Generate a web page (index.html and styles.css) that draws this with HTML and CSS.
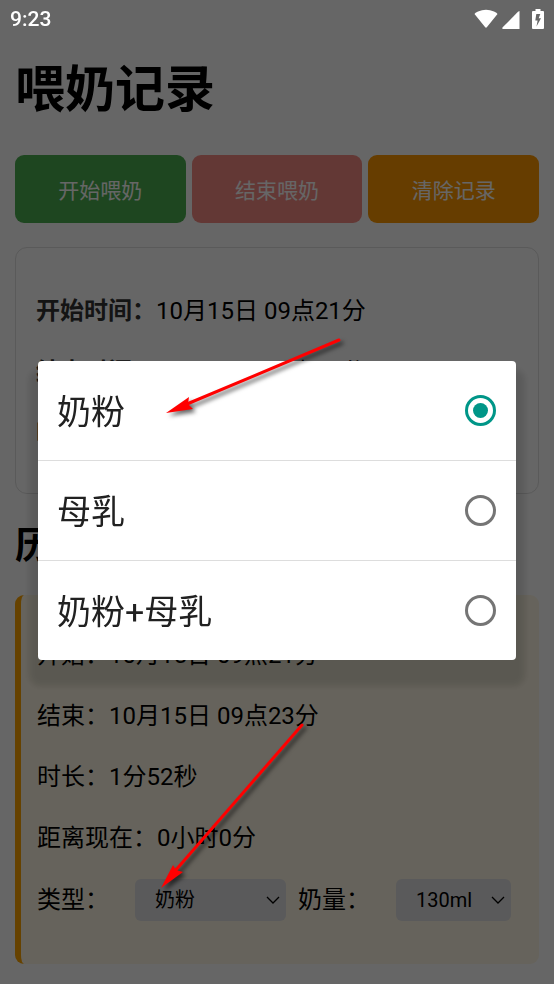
FILE: index.html
```html
<!DOCTYPE html>
<html lang="zh-CN">
<head>
  <meta charset="UTF-8">
  <meta name="viewport" content="width=device-width, initial-scale=1.0">
  <title>喂奶记录</title>
  <link rel="stylesheet" href="styles.css">
</head>
<body>
  <header class="status-bar">
    <span class="clock">9:23</span>
    <div class="status-icons">
      <svg class="wifi" width="24" height="20" viewBox="0 0 24 20"><path d="M0.5 5Q1 3.6 4 2.4Q12 -1 20 2.4Q23 3.6 23.5 5L13 18Q12 19.4 11 18Z"/></svg>
      <svg class="signal" width="18" height="18" viewBox="0 0 18 18"><path d="M17.5 0V18H1Q-0.3 17.6 0.7 16.3L16 0.8Z"/></svg>
      <svg class="battery" width="12" height="20" viewBox="0 0 12 20"><path fill-rule="evenodd" d="M3.5 0H8.5V2H11Q12 2 12 3V19Q12 20 11 20H1Q0 20 0 19V3Q0 2 1 2H3.5ZM4.3 5L3.3 11.4H5.6L4.5 17.4L9 9.3H6.7L8.3 5Z"/></svg>
    </div>
  </header>

  <main class="page">
    <h1>喂奶记录</h1>

    <div class="buttons">
      <button type="button" class="btn btn-start">开始喂奶</button>
      <button type="button" class="btn btn-end" disabled>结束喂奶</button>
      <button type="button" class="btn btn-clear">清除记录</button>
    </div>

    <section class="current">
      <p><strong>开始时间：</strong>10月15日 09点21分</p>
      <p><strong>结束时间：</strong>10月15日 09点23分</p>
      <p><strong>时长：</strong>1分52秒</p>
    </section>

    <h2>历史记录</h2>

    <article class="record">
      <p>开始：10月15日 09点21分</p>
      <p>结束：10月15日 09点23分</p>
      <p>时长：1分52秒</p>
      <p>距离现在：0小时0分</p>
      <div class="fields">
        <div class="field">
          <label for="type">类型：</label>
          <div class="select-wrap select-type">
            <select id="type">
              <option selected>奶粉</option>
              <option>母乳</option>
              <option>奶粉+母乳</option>
            </select>
            <svg class="chevron" width="14" height="8" viewBox="0 0 14 8"><path d="M1 1L7 7L13 1"/></svg>
          </div>
        </div>
        <div class="field">
          <label for="amount">奶量：</label>
          <div class="select-wrap select-amount">
            <select id="amount">
              <option selected>130ml</option>
            </select>
            <svg class="chevron" width="14" height="8" viewBox="0 0 14 8"><path d="M1 1L7 7L13 1"/></svg>
          </div>
        </div>
      </div>
    </article>
  </main>

  <div class="overlay">
    <div class="dialog" role="dialog" aria-label="类型">
      <label class="option"><span>奶粉</span><input type="radio" name="milk" checked></label>
      <label class="option"><span>母乳</span><input type="radio" name="milk"></label>
      <label class="option"><span>奶粉+母乳</span><input type="radio" name="milk"></label>
    </div>
  </div>

  <svg class="arrows" viewBox="0 0 554 984" aria-hidden="true">
    <path class="shaft" d="M339 340L187 404"/>
    <path class="head" d="M166 413L189 397L188 404L193 409Z"/>
    <path class="shaft" d="M302 725L175 871"/>
    <path class="head" d="M161 888L173 865L176 870L183 872Z"/>
  </svg>
</body>
</html>
```
FILE: styles.css
```css
* {
  box-sizing: border-box;
}

body {
  margin: 0;
  background: #fff;
  color: #000;
  font-family: Roboto, "Noto Sans CJK SC", sans-serif;
  font-size: 24px;
  line-height: 37px;
}

/* status bar */
.status-bar {
  position: fixed;
  top: 0;
  left: 0;
  right: 0;
  z-index: 20;
  display: flex;
  justify-content: space-between;
  align-items: center;
  height: 38px;
  padding: 0 10px;
  color: #fff;
}

.clock {
  font-size: 21px;
  font-weight: 500;
}

.status-icons {
  display: flex;
  align-items: flex-end;
  fill: #fff;
}

.signal {
  margin: 0 12px 0 4px;
}

/* page */
.page {
  padding: 54px 15px 20px;
}

h1 {
  margin: 0 0 29px;
  font-size: 50px;
  line-height: 72px;
}

h2 {
  margin: 26px 0 21px;
  font-size: 37px;
  line-height: 54px;
}

.buttons {
  display: flex;
  gap: 6px;
  margin-bottom: 24px;
}

.btn {
  flex: 1;
  height: 68px;
  padding: 0;
  border: 0;
  border-radius: 9px;
  color: #fff;
  font-family: inherit;
  font-size: 21px;
}

.btn-start {
  background: #4caf50;
}

.btn-end {
  background: #f44336;
}

.btn-clear {
  background: #ff9800;
}

.btn:disabled {
  opacity: 0.6;
}

.current {
  padding: 21px 20px 17px;
  border: 1px solid #e0e0e0;
  border-radius: 12px;
}

.current p {
  margin: 24px 0;
}

.current strong {
  color: #333;
}

.record {
  padding: 18px 16px 43px;
  border-left: 6px solid #ffa500;
  border-radius: 9px;
  background: #fff8e5;
}

.record p {
  margin: 24px 0;
}

.record p:last-of-type {
  margin-bottom: 22px;
}

.fields {
  display: flex;
  gap: 12px;
}

.field {
  display: flex;
  align-items: center;
  gap: 26px;
}

.select-wrap {
  position: relative;
}

.select-type {
  width: 151px;
}

.select-amount {
  width: 115px;
}

select {
  display: block;
  width: 100%;
  height: 42px;
  padding: 0 20px;
  border: 0;
  border-radius: 6px;
  background: #e1e1e3;
  color: #000;
  font-family: inherit;
  font-size: 20px;
  appearance: none;
}

.chevron {
  position: absolute;
  top: 17px;
  right: 6px;
  fill: none;
  stroke: #000;
  stroke-width: 1.3;
  pointer-events: none;
}

/* option dialog */
.overlay {
  position: fixed;
  inset: 0;
  z-index: 10;
  display: flex;
  align-items: center;
  padding: 37px 38px 0;
  background: rgba(0, 0, 0, 0.6);
}

.dialog {
  flex: 1;
  border-radius: 4px;
  background: #fff;
  box-shadow: 0 17px 6px 9px rgba(0, 0, 0, 0.12);
}

.option {
  display: flex;
  box-sizing: content-box;
  justify-content: space-between;
  align-items: center;
  height: 99px;
  padding: 0 20px 0 19px;
  color: #212121;
  font-size: 34px;
}

.option span {
  padding-top: 4px;
}

.option + .option {
  border-top: 1px solid #ddd;
}

.option input {
  display: grid;
  place-items: center;
  width: 31px;
  height: 31px;
  margin: 0;
  border: 3px solid #757575;
  border-radius: 50%;
  appearance: none;
}

.option input:checked {
  border-color: #009688;
}

.option input:checked::before {
  content: "";
  width: 15px;
  height: 15px;
  border-radius: 50%;
  background: #009688;
}

/* hint arrows */
.arrows {
  position: absolute;
  top: 0;
  left: 0;
  z-index: 30;
  width: 100%;
  pointer-events: none;
  filter: drop-shadow(3px 3px 2px rgba(0, 0, 0, 0.6));
}

.shaft {
  fill: none;
  stroke: #f00;
  stroke-width: 3;
  stroke-linecap: round;
}

.head {
  fill: #f00;
}
```
